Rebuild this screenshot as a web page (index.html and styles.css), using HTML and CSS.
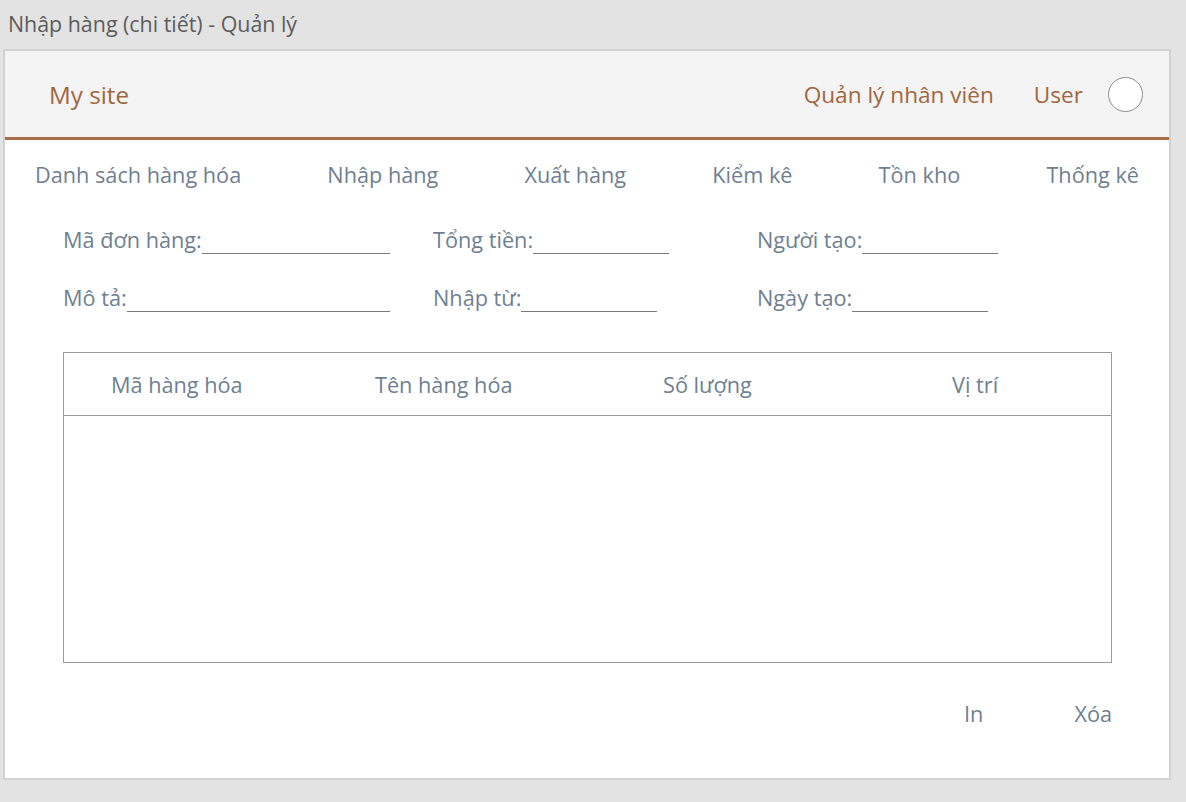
FILE: index.html
```html
<!DOCTYPE html>
<html lang="vi">
<head>
<meta charset="utf-8">
<title>Nhập hàng (chi tiết) - Quản lý</title>
<link rel="stylesheet" href="styles.css">
</head>
<body>
<div class="page-title">Nhập hàng (chi tiết) - Quản lý</div>
<div class="card">
  <header class="topbar">
    <div class="brand">My site</div>
    <div class="top-right">
      <a class="top-link">Quản lý nhân viên</a>
      <a class="top-link">User</a>
      <span class="avatar"></span>
    </div>
  </header>
  <nav class="nav">
    <a>Danh sách hàng hóa</a>
    <a>Nhập hàng</a>
    <a>Xuất hàng</a>
    <a>Kiểm kê</a>
    <a>Tồn kho</a>
    <a>Thống kê</a>
  </nav>
  <section class="form">
    <div class="field f1"><span class="lbl">Mã đơn hàng:</span><span class="line fill"></span></div>
    <div class="field f2"><span class="lbl">Tổng tiền:</span><span class="line"></span></div>
    <div class="field f3"><span class="lbl">Người tạo:</span><span class="line"></span></div>
    <div class="field f1"><span class="lbl">Mô tả:</span><span class="line fill"></span></div>
    <div class="field f2"><span class="lbl">Nhập từ:</span><span class="line"></span></div>
    <div class="field f3"><span class="lbl">Ngày tạo:</span><span class="line"></span></div>
  </section>
  <section class="table">
    <div class="thead">
      <div class="th c1">Mã hàng hóa</div>
      <div class="th c2">Tên hàng hóa</div>
      <div class="th c3">Số lượng</div>
      <div class="th c4">Vị trí</div>
    </div>
    <div class="tbody"></div>
  </section>
  <div class="actions">
    <a>In</a>
    <a>Xóa</a>
  </div>
</div>
</body>
</html>
```
FILE: styles.css
```css
* { box-sizing: border-box; }
html, body { margin: 0; padding: 0; }
body {
  background: #e3e3e3;
  font-family: "Open Sans", "Noto Sans", sans-serif;
  width: 1186px;
  height: 802px;
  overflow: hidden;
}
a { text-decoration: none; cursor: pointer; }

.page-title {
  height: 49px;
  padding: 10px 0 0 8px;
  font-size: 21.4px;
  line-height: 28px;
  color: #5c5c5c;
}

.card {
  margin-left: 3px;
  width: 1168px;
  height: 731px;
  background: #fff;
  border: 2px solid #d2d2d2;
}

.topbar {
  height: 89px;
  background: #f4f4f4;
  border-bottom: 3px solid #a86d45;
  display: flex;
  align-items: center;
  justify-content: space-between;
  padding: 2px 26px 0 44px;
  color: #a0663d;
  font-size: 22.6px;
}
.brand { line-height: 30px; font-size: 24.2px; }
.top-right { display: flex; align-items: center; }
.top-link { color: #a0663d; margin-right: 40px; line-height: 30px; }
.top-link:nth-child(2) { margin-right: 25px; }
.avatar {
  width: 35px;
  height: 35px;
  border-radius: 50%;
  border: 1px solid #8c8c8c;
  background: #fff;
  margin-top: -2px;
}

.nav {
  display: flex;
  justify-content: space-between;
  padding: 20px 30px 0 30px;
  height: 70px;
}
.nav a {
  color: #6f7f90;
  font-size: 21.7px;
  line-height: 30px;
}

.form {
  display: grid;
  grid-template-columns: 370px 324px 1fr;
  grid-auto-rows: 30px;
  align-content: start;
  row-gap: 28px;
  padding: 15px 0 0 58px;
  height: 142px;
}
.field {
  display: flex;
  align-items: flex-end;
  color: #6f7f90;
  font-size: 21.7px;
  line-height: 30px;
}
.f1 { width: 327px; }
.lbl { white-space: nowrap; }
.line {
  display: block;
  width: 136px;
  border-bottom: 1px solid #7a7a7a;
  margin-bottom: 1px;
}
.line.fill { flex: 1; }

.table {
  margin-left: 58px;
  width: 1049px;
  height: 311px;
  border: 1px solid #9a9a9a;
}
.thead {
  display: flex;
  height: 63px;
  align-items: center;
  padding-left: 47px;
  border-bottom: 1px solid #9a9a9a;
  color: #6f7f90;
  font-size: 21.7px;
}
.th.c1 { width: 264px; }
.th.c2 { width: 288px; }
.th.c3 { width: 289px; }

.actions {
  display: flex;
  justify-content: flex-end;
  gap: 91px;
  width: 1107px;
  padding-top: 36px;
  color: #6f7f90;
  font-size: 21.7px;
  line-height: 30px;
}
.actions a { color: #6f7f90; }
```
